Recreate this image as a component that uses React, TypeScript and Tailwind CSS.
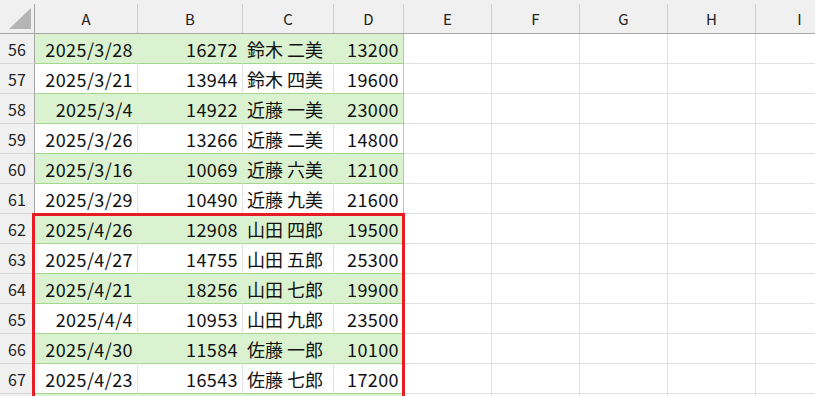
import React from "react";

const cols = [
  { key: "A", w: "w-[103px]" },
  { key: "B", w: "w-[105px]" },
  { key: "C", w: "w-[91px]" },
  { key: "D", w: "w-[70px]" },
  { key: "E", w: "w-[88px]" },
  { key: "F", w: "w-[88px]" },
  { key: "G", w: "w-[88px]" },
  { key: "H", w: "w-[88px]" },
  { key: "I", w: "w-[88px]" },
];

const rows: [number, string, string, string, string][] = [
  [56, "2025/3/28", "16272", "鈴木 二美", "13200"],
  [57, "2025/3/21", "13944", "鈴木 四美", "19600"],
  [58, "2025/3/4", "14922", "近藤 一美", "23000"],
  [59, "2025/3/26", "13266", "近藤 二美", "14800"],
  [60, "2025/3/16", "10069", "近藤 六美", "12100"],
  [61, "2025/3/29", "10490", "近藤 九美", "21600"],
  [62, "2025/4/26", "12908", "山田 四郎", "19500"],
  [63, "2025/4/27", "14755", "山田 五郎", "25300"],
  [64, "2025/4/21", "18256", "山田 七郎", "19900"],
  [65, "2025/4/4", "10953", "山田 九郎", "23500"],
  [66, "2025/4/30", "11584", "佐藤 一郎", "10100"],
  [67, "2025/4/23", "16543", "佐藤 七郎", "17200"],
];

function DataRow({ r, last }: { r: [number, string, string, string, string]; last?: boolean }) {
  const [n, a, b, c, d] = r;
  const green = n % 2 === 0;
  const fill = green ? "bg-[#daf2d0]" : "bg-white";
  const inner = green ? "border-r-[#daf2d0]" : "border-r-[#e1e1e1]";
  return (
    <div className="flex h-[30px] shrink-0">
      <div className="w-[35px] shrink-0 flex items-center justify-center bg-[#f0f0f0] border-r border-r-[#a6a6a6] border-b border-b-[#d6d6d6] text-[16px] text-[#222]">
        {last ? "" : n}
      </div>
      <div className={`w-[103px] shrink-0 flex items-center justify-end pr-[4px] tracking-[0.4px] border-b border-b-[#a3d68e] border-r ${inner} ${fill}`}>
        {a}
      </div>
      <div className={`w-[105px] shrink-0 flex items-center justify-end pr-[4px] tracking-[0.4px] border-b border-b-[#a3d68e] border-r ${inner} ${fill}`}>
        {b}
      </div>
      <div className={`w-[91px] shrink-0 flex items-center pl-[4px] border-b border-b-[#a3d68e] border-r ${inner} ${fill}`}>
        {c}
      </div>
      <div className={`w-[70px] shrink-0 flex items-center justify-end pr-[4px] tracking-[0.4px] border-b border-b-[#a3d68e] border-r border-r-[#a3d68e] ${fill}`}>
        {d}
      </div>
      {cols.slice(4).map((col) => (
        <div key={col.key} className={`${col.w} shrink-0 border-b border-r border-[#e1e1e1]`} />
      ))}
    </div>
  );
}

export default function App() {
  return (
    <div className="relative w-[815px] h-[396px] overflow-hidden bg-white text-[18px] text-[#111] font-['Noto_Sans_CJK_JP','Noto_Sans',sans-serif] leading-none">
      <div className="flex flex-col">
        <div className="flex h-[34px] shrink-0 bg-[#f0f0f0] border-b border-b-[#a6a6a6]">
          <div className="w-[35px] shrink-0 pt-[4px]">
            <div className="h-full border-r border-r-[#a6a6a6] flex items-end justify-end pr-[3px] pb-[4px]">
              <svg width="22" height="21" viewBox="0 0 22 21">
                <polygon points="22,0 22,21 0,21" fill="#b4b4b4" />
              </svg>
            </div>
          </div>
          {cols.map((col) => (
            <div key={col.key} className={`${col.w} shrink-0 pt-[4px]`}>
              <div className="h-full border-r border-r-[#cfcfcf] flex items-center justify-center text-[15px] text-[#222]">
                {col.key}
              </div>
            </div>
          ))}
        </div>
        {rows.map((r) => (
          <DataRow key={r[0]} r={r} />
        ))}
        <DataRow r={[68, "", "", "", ""]} last />
      </div>
      <div className="absolute left-[32px] top-[213px] w-[373px] h-[220px] border-[3px] border-[#e81c24] pointer-events-none" />
    </div>
  );
}
